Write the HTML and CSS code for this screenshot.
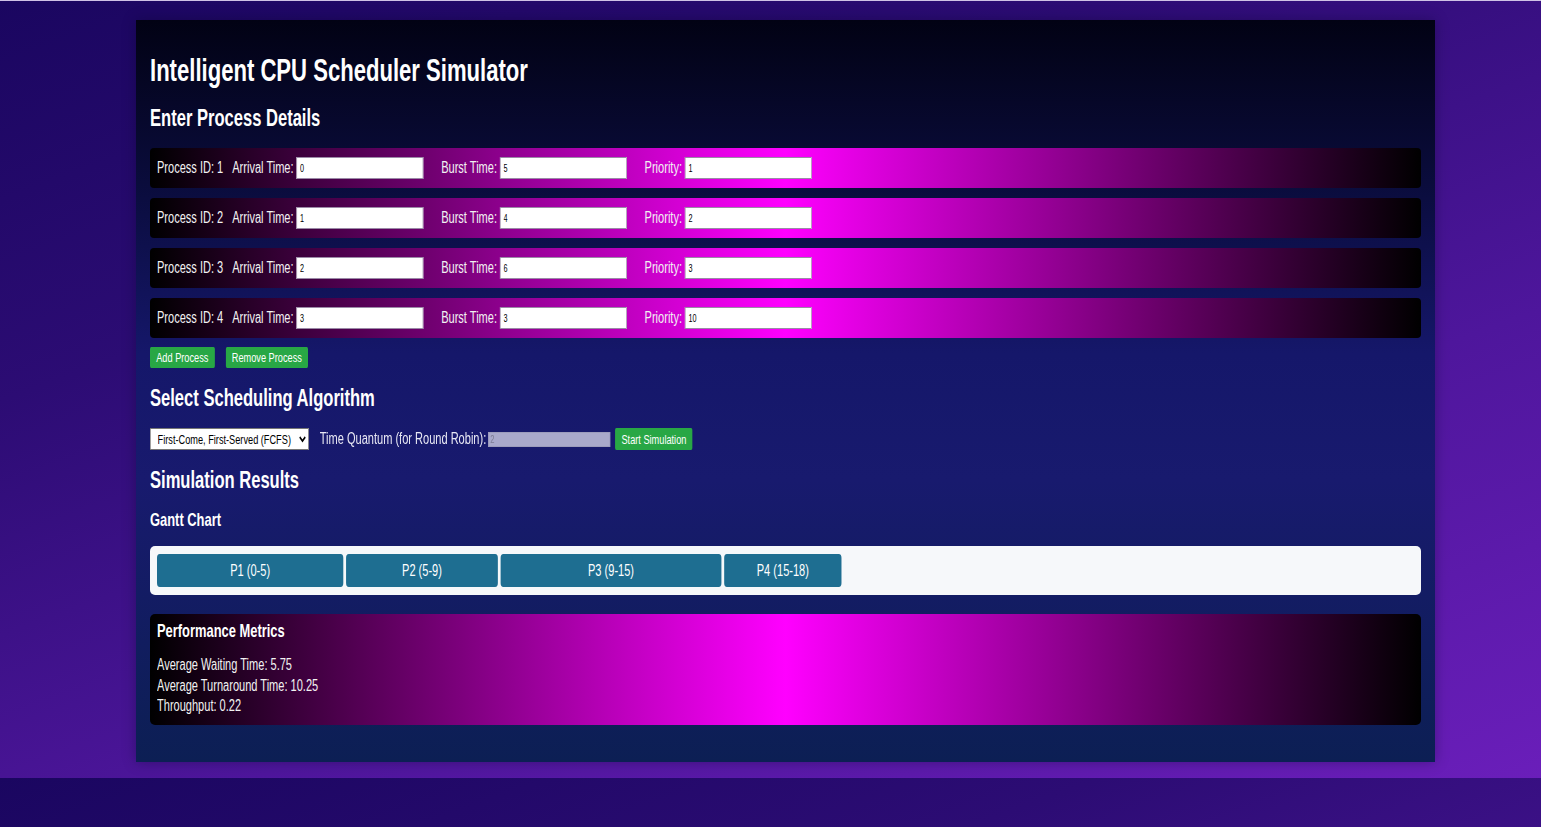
FILE: index.html
```html
<!DOCTYPE html>
<html lang="en">
<head>
<meta charset="utf-8">
<title>Intelligent CPU Scheduler Simulator</title>
<link rel="stylesheet" href="styles.css">
</head>
<body>
<div class="container">
  <h1 class="title squeeze">Intelligent CPU Scheduler Simulator</h1>
  <h2 class="section first squeeze">Enter Process Details</h2>

  <div class="processes">
    <div class="proc-row">
      <div class="proc-fields squeeze">
        <span class="pid">Process ID: 1</span>
        <label class="lbl">Arrival Time:</label><input class="num" type="text" value="0">
        <label class="lbl">Burst Time:</label><input class="num" type="text" value="5">
        <label class="lbl">Priority:</label><input class="num" type="text" value="1">
      </div>
    </div>
    <div class="proc-row">
      <div class="proc-fields squeeze">
        <span class="pid">Process ID: 2</span>
        <label class="lbl">Arrival Time:</label><input class="num" type="text" value="1">
        <label class="lbl">Burst Time:</label><input class="num" type="text" value="4">
        <label class="lbl">Priority:</label><input class="num" type="text" value="2">
      </div>
    </div>
    <div class="proc-row">
      <div class="proc-fields squeeze">
        <span class="pid">Process ID: 3</span>
        <label class="lbl">Arrival Time:</label><input class="num" type="text" value="2">
        <label class="lbl">Burst Time:</label><input class="num" type="text" value="6">
        <label class="lbl">Priority:</label><input class="num" type="text" value="3">
      </div>
    </div>
    <div class="proc-row">
      <div class="proc-fields squeeze">
        <span class="pid">Process ID: 4</span>
        <label class="lbl">Arrival Time:</label><input class="num" type="text" value="3">
        <label class="lbl">Burst Time:</label><input class="num" type="text" value="3">
        <label class="lbl">Priority:</label><input class="num" type="text" value="10">
      </div>
    </div>
  </div>

  <div class="btn-row squeeze">
    <button class="btn">Add Process</button>
    <button class="btn">Remove Process</button>
  </div>

  <h2 class="section squeeze">Select Scheduling Algorithm</h2>

  <div class="algo-row squeeze">
    <select class="algo">
      <option>First-Come, First-Served (FCFS)</option>
      <option>Shortest Job First (SJF)</option>
      <option>Priority Scheduling</option>
      <option>Round Robin (RR)</option>
    </select>
    <label class="quantum-lbl">Time Quantum (for Round Robin):</label>
    <input class="quantum" type="text" value="2" disabled>
    <button class="btn start">Start Simulation</button>
  </div>

  <h2 class="section squeeze">Simulation Results</h2>
  <h3 class="sub squeeze">Gantt Chart</h3>

  <div class="gantt">
    <div class="gantt-bars squeeze">
      <div class="bar" style="width:250px">P1 (0-5)</div>
      <div class="bar" style="width:200px">P2 (5-9)</div>
      <div class="bar" style="width:300px">P3 (9-15)</div>
      <div class="bar" style="width:150px">P4 (15-18)</div>
    </div>
  </div>

  <div class="metrics">
    <div class="metrics-body squeeze">
      <h3 class="metrics-title">Performance Metrics</h3>
      <p class="metric">Average Waiting Time: 5.75</p>
      <p class="metric">Average Turnaround Time: 10.25</p>
      <p class="metric">Throughput: 0.22</p>
    </div>
  </div>
</div>
</body>
</html>
```

FILE: styles.css
```css
html {
  background: linear-gradient(160deg, #1a0660 0%, #2c0c74 30%, #4e169c 65%, #6a1eba 100%) 0 0 / 100% 778px repeat;
  min-height: 100%;
  box-shadow: inset 0 1px 0 #cfc2e6;
}

body {
  margin: 0;
  padding: 20px 0 16px 136px;
  font-family: "Liberation Sans", Arial, sans-serif;
  color: #fff;
}

/* The UI is drawn horizontally compressed: contents are squeezed, boxes keep their width */
.squeeze {
  transform: scaleX(0.69);
  transform-origin: 0 50%;
}

.container {
  width: 1299px;
  box-sizing: border-box;
  padding: 14px 14px;
  display: flex;
  flex-direction: column;
  background: linear-gradient(180deg, #020214 0%, #0a0c3c 22%, #15176a 45%, #181a6e 62%, #0c1f54 100%);
  box-shadow: 0 0 12px rgba(10, 0, 40, 0.35);
}

.title {
  margin: 18px 0 0;
  font-size: 32px;
  line-height: 36px;
  font-weight: bold;
  white-space: nowrap;
}

.section {
  margin: 16px 0 0;
  font-size: 24px;
  line-height: 28px;
  font-weight: bold;
  white-space: nowrap;
}

.sub {
  margin: 16px 0 0;
  font-size: 18.72px;
  line-height: 20px;
  font-weight: bold;
  white-space: nowrap;
}

.processes {
  margin-top: 16px;
  display: flex;
  flex-direction: column;
  gap: 10px;
}

.proc-row {
  height: 40px;
  padding: 0 7px;
  border-radius: 4px;
  background: linear-gradient(90deg, #000 0%, #ff00ff 50%, #000 100%);
}

.proc-fields {
  height: 100%;
  display: flex;
  align-items: center;
  font-size: 16px;
  color: #f2f2f2;
  white-space: nowrap;
}

.pid {
  margin-right: 13px;
}

.lbl {
  margin-right: 4.4px;
}

.num {
  flex: none;
  width: 184px;
  height: 22px;
  margin-right: 25.5px;
  box-sizing: border-box;
  border: 1px solid #9a8aa6;
  padding: 0 4px;
  font-family: "Liberation Sans", Arial, sans-serif;
  font-size: 10.5px;
  color: #000;
  background: #fff;
}

.btn-row {
  margin-top: 9px;
  display: flex;
  gap: 16px;
}

.btn {
  flex: none;
  height: 21px;
  padding: 0 9px;
  border: none;
  border-radius: 2px;
  background: #28a745;
  color: #fff;
  font-family: "Liberation Sans", Arial, sans-serif;
  font-size: 13.33px;
  white-space: nowrap;
}

.algo-row {
  margin-top: 16px;
  height: 22px;
  display: flex;
  align-items: center;
  white-space: nowrap;
}

.algo {
  flex: none;
  width: 230px;
  height: 22px;
  border: 1px solid #767676;
  border-radius: 0;
  background: #fff;
  color: #000;
  font-family: "Liberation Sans", Arial, sans-serif;
  font-size: 13.33px;
  padding: 0 2px 0 6px;
}

.quantum-lbl {
  margin-left: 16px;
  font-size: 16px;
  color: #e8e8f4;
}

.quantum {
  flex: none;
  margin-left: 3px;
  width: 177px;
  height: 15px;
  box-sizing: border-box;
  border: 1px solid #9c9cbc;
  padding: 0 2px;
  background: #a9a9cb;
  color: #7c7c94;
  font-family: "Liberation Sans", Arial, sans-serif;
  font-size: 11px;
}

.btn.start {
  margin-left: 7px;
  height: 22px;
}

.gantt {
  margin-top: 16px;
  height: 49px;
  box-sizing: border-box;
  padding: 8px 7px;
  background: #f6f8fa;
  border-radius: 5px;
}

.gantt-bars {
  height: 100%;
  display: flex;
  gap: 4px;
}

.bar {
  flex: none;
  height: 33px;
  padding: 0 10px;
  display: flex;
  align-items: center;
  justify-content: center;
  background: #1e6e91;
  border-radius: 4px;
  font-size: 16px;
  color: #fff;
  white-space: nowrap;
}

.metrics {
  margin: 19px 0 23px;
  padding: 7px 7px 8.5px;
  border-radius: 5px;
  background: linear-gradient(90deg, #000 0%, #ff00ff 50%, #000 100%);
}

.metrics-title {
  margin: 0 0 14px;
  font-size: 18.72px;
  line-height: 20px;
  font-weight: bold;
}

.metric {
  margin: 0;
  font-size: 16px;
  line-height: 20.5px;
  color: #f2f2f2;
}
```
